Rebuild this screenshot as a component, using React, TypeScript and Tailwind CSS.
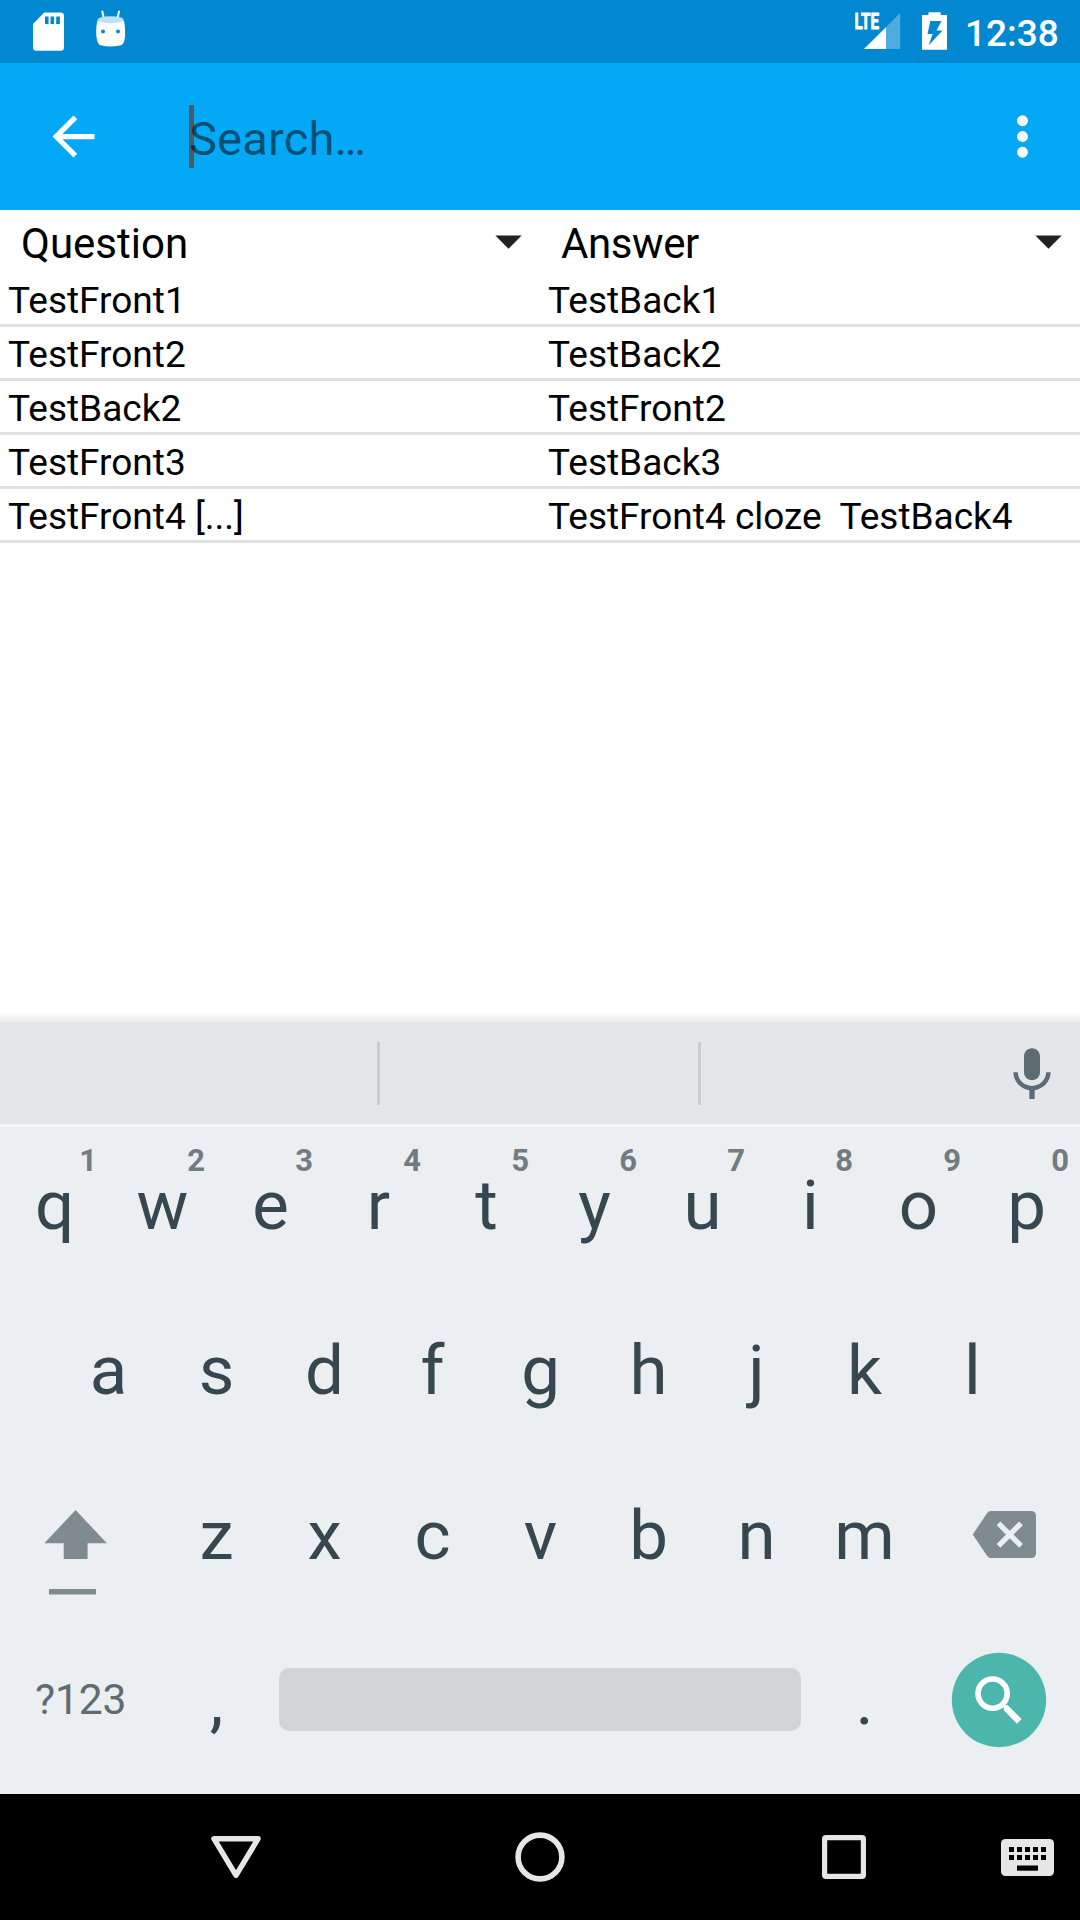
import React from "react";

const rows = [
  ["TestFront1", "TestBack1"],
  ["TestFront2", "TestBack2"],
  ["TestBack2", "TestFront2"],
  ["TestFront3", "TestBack3"],
  ["TestFront4 [...]", "TestFront4 cloze\u00a0 TestBack4"],
];

function StatusBar() {
  return (
    <div className="flex h-[63px] items-center justify-between bg-[#0288d1] pr-[21px] pl-8 text-white">
      <div className="flex items-center gap-[31px]">
        <svg width="32" height="63" viewBox="0 0 32 63">
          <path
            fill="currentColor"
            fillRule="evenodd"
            d="M12.200 12.500H28.500a3.500 3.500 0 0 1 3.500 3.500V47.300a3.500 3.500 0 0 1-3.500 3.500H4.500A3.500 3.500 0 0 1 1 47.300V24zM13 16.500v7.500h3.600v-7.500zM18.500 16.500v7.500h3.600v-7.500zM24.200 16.500v7.500h3.700v-7.500z"
          />
        </svg>
        <svg width="32" height="63" viewBox="0 0 32 63">
          <path d="M7.300 11.500 9 19M24 11.500 22.300 19" stroke="white" strokeWidth="2" strokeLinecap="round" />
          <path
            fill="white"
            d="M2.300 20.500Q16 24.500 29 20.500 31 32 29.500 40 28.800 44 26 45.200 15.500 47.900 5.500 45.200 2.800 44 2 40 .2 32 2.300 20.500z"
          />
          <ellipse cx="15.700" cy="19.700" rx="13" ry="3.500" fill="#bfe1f4" />
          <circle cx="8" cy="31.500" r="2" fill="#0288d1" />
          <circle cx="23" cy="31.500" r="2" fill="#0288d1" />
        </svg>
      </div>
      <div className="flex items-center">
        <svg width="46" height="63" viewBox="0 0 46 63" className="mr-[21px]">
          <path d="M45.200 13V49H9z" fill="white" fillOpacity=".3" />
          <path d="M31 27.200V49H9z" fill="white" />
          <text
            x="-.5"
            y="29"
            fill="white"
            stroke="white"
            strokeWidth=".8"
            fontSize="22"
            fontWeight="700"
            textLength="24.500"
            lengthAdjust="spacingAndGlyphs"
          >
            LTE
          </text>
        </svg>
        <svg width="25" height="63" viewBox="0 0 25 63" className="mr-[18px]">
          <path
            fill="white"
            fillRule="evenodd"
            d="M6.500 12.300H18.700V15H25V49.800H0V15H6.500zM8.300 21 5.500 34H10.700L6.500 45.500 20.500 30.500H14.500L19.500 21z"
          />
        </svg>
        <span className="w-[94px] pt-[3px] text-[37px] leading-[43px] font-medium whitespace-nowrap">12:38</span>
      </div>
    </div>
  );
}

function AppBar() {
  return (
    <div className="flex h-[147px] items-center justify-between bg-[#03a9f4] pr-[26px] pl-[42px]">
      <div className="flex items-center">
        <svg width="63" height="63" viewBox="0 0 24 24" fill="white">
          <path d="M20 11H7.830l5.590-5.590L12 4l-8 8 8 8 1.410-1.410L7.830 13H20z" />
        </svg>
        <div className="relative ml-[84px] flex h-[63px] items-center">
          <span className="absolute top-0 left-0 h-[63px] w-[5px] bg-[#4a5b66]" />
          <span className="relative pt-1 text-[47px] leading-none tracking-[0.2px] text-black/54">Search…</span>
        </div>
      </div>
      <svg width="63" height="63" viewBox="0 0 24 24" fill="white">
        <circle cx="12" cy="6" r="2.080" />
        <circle cx="12" cy="12" r="2.080" />
        <circle cx="12" cy="18" r="2.080" />
      </svg>
    </div>
  );
}

function Spinner({ label, tight }: { label: string; tight?: boolean }) {
  return (
    <div className="flex h-[63px] flex-1 items-center justify-between pr-[18px] pl-[21px]">
      <span className={tight ? "pt-[5px] text-[42px] leading-none tracking-[-0.4px]" : "pt-[5px] text-[42px] leading-none"}>
        {label}
      </span>
      <svg width="27" height="14" viewBox="0 0 27 14">
        <path d="M.3 .5H26.700L13.500 13.700z" fill="#212121" />
      </svg>
    </div>
  );
}

function Results() {
  return (
    <div className="flex flex-1 flex-col text-black">
      <div className="flex">
        <Spinner label="Question" />
        <Spinner label="Answer" tight />
      </div>
      {rows.map(([q, a]) => (
        <div key={q} className="flex h-[54px] items-center border-b-[3px] border-[#e0e0e0] text-[37px] leading-none">
          <span className="flex-1 pt-1 pl-2">{q}</span>
          <span className="flex-1 pt-1 pl-2 whitespace-pre">{a}</span>
        </div>
      ))}
      <div className="mt-auto h-2.5 bg-linear-to-b from-white to-[#ececec]" />
    </div>
  );
}

function Key({ label, hint }: { label: string; hint?: string }) {
  return (
    <div className="relative flex h-[165px] w-[108px] items-center justify-center pb-2 pl-px">
      <span className="text-[69px] leading-none">{label}</span>
      {hint && (
        <span className="absolute top-[18px] right-[11px] text-[31px] leading-none font-bold text-[#717c82]">
          {hint}
        </span>
      )}
    </div>
  );
}

function Keyboard() {
  return (
    <div className="bg-[#ebeff2] text-[#37474f]">
      <div className="flex h-[105px] items-center border-b-[3px] border-[#f5f7f8] bg-[#e3e7ea] pr-4 pl-[377px]">
        <span className="h-[63px] w-[3px] bg-[#c9cdd0]" />
        <span className="ml-[318px] h-[63px] w-[3px] bg-[#c9cdd0]" />
        <svg width="64" height="64" viewBox="0 0 24 24" fill="#5d6b72" className="mt-[3px] ml-auto">
          <path d="M12 14c1.660 0 3-1.340 3-3V5c0-1.660-1.340-3-3-3S9 3.340 9 5v6c0 1.660 1.340 3 3 3zm5.300-3c0 3-2.540 5.100-5.300 5.100S6.700 14 6.700 11H5c0 3.410 2.720 6.230 6 6.720V21h2v-3.280c3.280-.48 6-3.300 6-6.720h-1.700z" />
        </svg>
      </div>
      <div className="flex">
        {"qwertyuiop".split("").map((k, i) => (
          <Key key={k} label={k} hint={String((i + 1) % 10)} />
        ))}
      </div>
      <div className="flex justify-center">
        {"asdfghjkl".split("").map((k) => (
          <Key key={k} label={k} />
        ))}
      </div>
      <div className="flex">
        <svg width="162" height="165" viewBox="0 0 162 165" fill="#808b8f">
          <path d="M75.600 53 106.900 86.300H87.600V102H63.700V86.300H44.300z" />
          <rect x="49" y="132" width="47" height="5.500" />
        </svg>
        {"zxcvbnm".split("").map((k) => (
          <Key key={k} label={k} />
        ))}
        <svg width="162" height="165" viewBox="0 0 162 165">
          <path d="M72.500 54H113.500a4.500 4.500 0 0 1 4.500 4.500V96.500a4.500 4.500 0 0 1-4.500 4.500H72.500Q70.500 101 69 98.800L54.800 77.500 69 56.200Q70.500 54 72.500 54z" fill="#808b8f" />
          <path d="M80.500 66.300 103 88.800M103 66.300 80.500 88.800" stroke="#ebeff2" strokeWidth="5.300" />
        </svg>
      </div>
      <div className="flex h-[172px] items-start">
        <div className="flex h-[165px] w-[162px] items-center pb-[9px] pl-[35px] text-[42.500px] leading-none tracking-[-0.1px] text-[#5d6b72]">
          ?123
        </div>
        <Key label="," />
        <div className="flex h-[165px] w-[540px] items-center px-[9px] pb-[10px]">
          <div className="h-[63px] w-full rounded-[10px] bg-[#d1d5d8]" />
        </div>
        <Key label="." />
        <svg width="162" height="165" viewBox="0 0 162 165">
          <circle cx="81" cy="78" r="47.200" fill="#4db6ac" />
          <circle cx="74.600" cy="71.600" r="14.600" fill="none" stroke="white" strokeWidth="5.600" />
          <path d="M85.500 83.500 89.500 83 103.600 97 98.900 101.700 86 88.500z" fill="white" />
        </svg>
      </div>
    </div>
  );
}

function NavBar() {
  return (
    <div className="flex h-[126px] items-center bg-black pr-[21px] pl-[84px]">
      <div className="flex w-[304px] justify-center">
        <svg width="56" height="56" viewBox="0 0 56 56" fill="none" stroke="#e6e6e6" strokeWidth="5.400" strokeLinejoin="round">
          <path d="M5.900 9.700H50.100L28 46.300z" />
        </svg>
      </div>
      <div className="flex w-[304px] justify-center">
        <svg width="56" height="56" viewBox="0 0 56 56" fill="none" stroke="#e6e6e6" strokeWidth="5.600">
          <circle cx="28" cy="28" r="21.900" />
        </svg>
      </div>
      <div className="flex w-[304px] justify-center">
        <svg width="56" height="56" viewBox="0 0 56 56" fill="none" stroke="#e6e6e6" strokeWidth="5.200">
          <rect x="8.600" y="8.600" width="38.800" height="38.800" rx="1.500" />
        </svg>
      </div>
      <div className="flex flex-1 justify-center">
        <svg width="53" height="37" viewBox="0 0 53 37" className="mt-px">
          <rect width="53" height="37" rx="4.500" fill="#e6e6e6" />
          {[8, 16, 24, 32, 40].map((x) => (
            <g key={x}>
              <rect x={x} y="8" width="5" height="5" />
              <rect x={x} y="16" width="5" height="5" />
            </g>
          ))}
          <rect x="16" y="26.500" width="21" height="5.200" />
        </svg>
      </div>
    </div>
  );
}

export default function App() {
  return (
    <div className="flex h-[1920px] w-[1080px] flex-col overflow-hidden bg-white font-[Roboto,sans-serif]">
      <StatusBar />
      <AppBar />
      <Results />
      <Keyboard />
      <NavBar />
    </div>
  );
}
